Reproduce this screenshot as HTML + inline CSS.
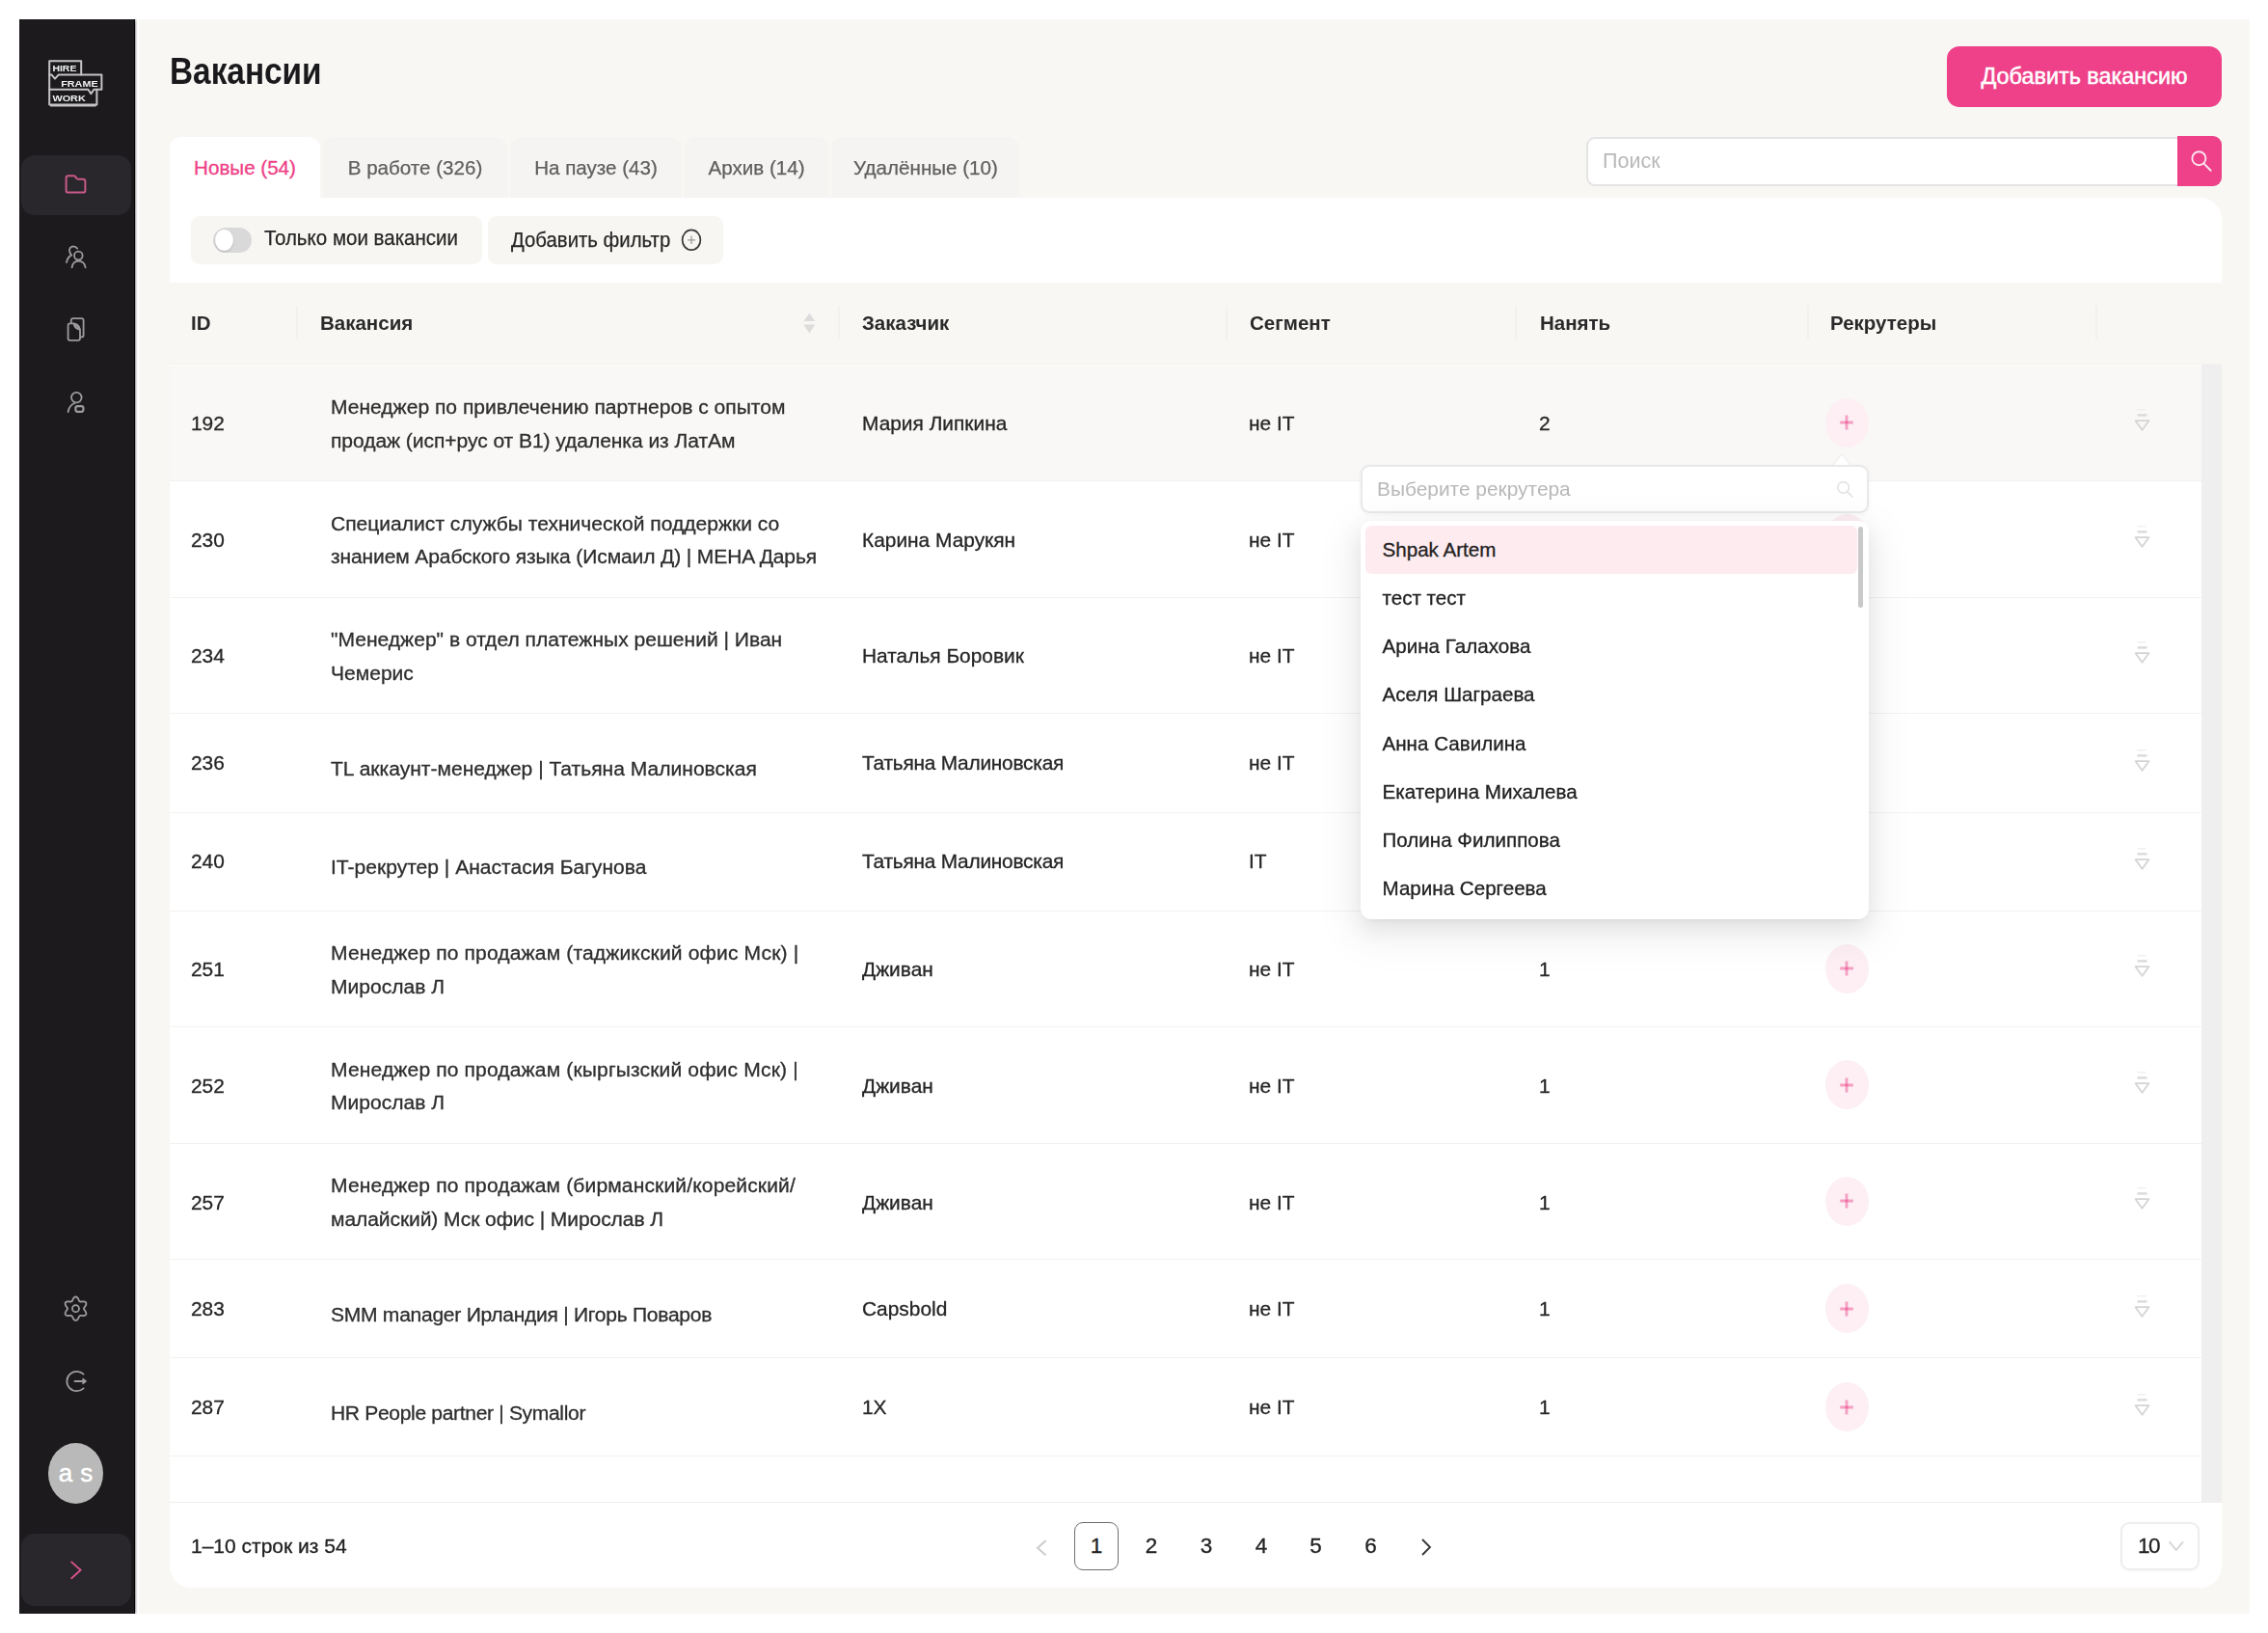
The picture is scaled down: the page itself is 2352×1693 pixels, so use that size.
<!DOCTYPE html>
<html lang="ru">
<head>
<meta charset="utf-8">
<title>Вакансии</title>
<style>
*{box-sizing:border-box;margin:0;padding:0}
html,body{width:2352px;height:1693px;background:#fff;overflow:hidden}
body{font-family:"Liberation Sans",sans-serif;color:#222;position:relative;font-size:21px}
.abs{position:absolute}
.app{position:absolute;left:20px;top:20px;width:2313px;height:1653px;background:#f8f7f4;overflow:hidden}
/* coordinates inside .app are page coords minus 20; we instead use a wrapper shifted -20 */
.pg{filter:blur(.45px);position:absolute;left:-20px;top:-20px;width:2352px;height:1693px}
.side{position:absolute;left:20px;top:20px;width:120.3px;height:1653px;background:#1c1a1d;border-right:1.6px solid #060506;box-shadow:1.5px 0 1.5px rgba(60,60,60,.45), 4.5px 0 0 #fdfdfd}
.nav-act{position:absolute;left:22px;top:161px;width:114px;height:62px;border-radius:14px;background:#29272b}
.nav-col{position:absolute;left:22px;top:1590px;width:114px;height:75px;border-radius:14px;background:#29272b}
.ico{position:absolute;display:block}
.avatar{position:absolute;left:50px;top:1496px;width:57px;height:63px;border-radius:50%;background:#b9b9b9;color:#fff;font-size:26px;text-align:center;line-height:63px;word-spacing:1px;-webkit-text-stroke:.5px #fff}
.title{position:absolute;left:175.5px;top:46px;font-size:38px;font-weight:700;line-height:56px;color:#1a1a1c;white-space:nowrap;transform:scaleX(.878);transform-origin:left center}
.addbtn{position:absolute;left:2019px;top:48px;width:285px;height:63px;border-radius:13px;background:#ee4189;color:#fff;font-size:23.4px;text-align:center;line-height:62px;white-space:nowrap;-webkit-text-stroke:.5px #fff}
.tab{position:absolute;top:142px;height:63px;border-radius:12px 12px 0 0;background:#f5f4f2;color:#5f5f5f;-webkit-text-stroke:.25px #5f5f5f;font-size:20.6px;line-height:64px;text-align:center;white-space:nowrap}
.tab.on{background:#fff;color:#ee3f86;-webkit-text-stroke:.3px #ee3f86}
.search{position:absolute;left:1645px;top:142px;width:659px;height:51px;border-radius:9px;background:#fff;border:2px solid #e5e4e4}
.search .ph{position:absolute;left:15px;top:0;line-height:46px;font-size:21.5px;color:#b8b8b8}
.search .sb{position:absolute;right:-2px;top:-2.7px;width:46px;height:51.2px;background:#ee4189;border-radius:0 9px 9px 0}
.fcard{position:absolute;left:176px;top:205px;width:2128px;height:88px;background:#fff;border-radius:0 22px 0 0}
.chip{position:absolute;top:223.5px;height:50px;border-radius:9px;background:#f7f6f3;font-size:22.2px;line-height:49px;color:#262626;white-space:nowrap;-webkit-text-stroke:.25px #262626}
.chip span{display:inline-block;transform:scaleX(.925);transform-origin:left center}
.toggle{position:absolute;left:221px;top:236px;width:40px;height:26px;border-radius:13px;background:#d9d9d9}
.toggle i{position:absolute;left:2px;top:2px;width:19px;height:22px;border-radius:50%;background:#fff;box-shadow:0 1px 2px rgba(0,0,0,.2)}
.th{position:absolute;top:313px;font-size:20.5px;font-weight:700;line-height:44px;color:#2a2a2a;white-space:nowrap}
.sep{position:absolute;top:317px;width:2px;height:35px;background:#f2f1ef;margin-left:-1px}
.hline{position:absolute;left:176px;width:2128px;height:1.5px;background:#f1f0ed}
.tbody{position:absolute;left:176px;top:378px;width:2107px;height:1179px;background:#fff}
.track{position:absolute;left:2283px;top:378px;width:21px;height:1179px;background:#f0efef}
.row{position:absolute;left:176px;width:2107px;background:#fff;border-bottom:1.5px solid #f3f2f0}
.row.hover{background:#f9f8f6}
.c{position:absolute;top:1.5px;height:100%;display:flex;align-items:center;font-size:20.9px;line-height:34.5px;color:#262626;white-space:nowrap;-webkit-text-stroke:.3px #262626}
.c.sgl{padding-bottom:2px}
.c-id{left:22px}
.c-vac{left:167px;color:#2e2e2e;font-size:21.05px;-webkit-text-stroke:.3px #2e2e2e}
.c-vac.sgl{padding-top:9.5px;padding-bottom:0}
.c-cust{left:718px}
.c-seg{left:1119px}
.c-hire{left:1420px}
.plus{position:absolute;left:1716.5px;top:50%;width:45px;height:51px;margin-top:-25.5px;border-radius:50%;background:#fdeff4;display:flex;align-items:center;justify-content:center}
.pin{position:absolute;left:2035px;top:50%;margin-top:-15px;width:20px;height:26px}
.foot{position:absolute;left:176px;top:1557px;width:2128px;height:89px;background:#fff;border-radius:0 0 22px 22px;border-top:1.5px solid #f0efec}
.ft{position:absolute;font-size:21px;color:#222;line-height:48px;white-space:nowrap;-webkit-text-stroke:.3px #222}
.pgn{position:absolute;top:1578px;width:46px;height:50px;font-size:22.5px;line-height:50px;text-align:center;color:#222;-webkit-text-stroke:.3px #222}
.pgn.on{border:1.6px solid #6e6e6e;border-radius:9px;background:#fff;line-height:47px}
.psize{position:absolute;left:2199px;top:1578px;width:82px;height:50px;border:2px solid #eeeeee;border-radius:9px;background:#fff;box-shadow:0 1px 3px rgba(0,0,0,.03)}
/* dropdown */
.sel{position:absolute;left:1411px;top:482px;width:527px;height:50px;border-radius:9px;background:#fff;border:2px solid #e9e9eb;box-shadow:0 1px 4px rgba(0,0,0,.05)}
.sel .ph{position:absolute;left:15px;top:0;line-height:46px;font-size:20.9px;color:#b8b8b8}
.dd{position:absolute;left:1410.5px;top:540px;width:527.5px;height:413px;border-radius:11px;background:#fff;box-shadow:0 9px 24px rgba(0,0,0,.08),0 4px 9px -6px rgba(0,0,0,.12),0 13px 40px 12px rgba(0,0,0,.05);overflow:hidden}
.dd .it{position:absolute;left:5px;width:510px;height:50px;border-radius:6px;padding-left:18px;font-size:20.6px;line-height:50px;color:#222;white-space:nowrap;-webkit-text-stroke:.3px #222}
.dd .it.on{background:#fdebef}
.dd .thumb{position:absolute;left:516px;top:6px;width:5px;height:84px;border-radius:3px;background:#c9c9c9}

</style>
</head>
<body>
<div class="app"><div class="pg">

<!-- main header -->
<div class="title">Вакансии</div>
<div class="addbtn">Добавить вакансию</div>

<!-- tabs -->
<div class="tab on" style="left:176px;width:156px">Новые (54)</div>
<div class="tab" style="left:335px;width:191px">В работе (326)</div>
<div class="tab" style="left:529px;width:178px">На паузе (43)</div>
<div class="tab" style="left:710px;width:149px">Архив (14)</div>
<div class="tab" style="left:863px;width:194px">Удалённые (10)</div>

<!-- search -->
<div class="search"><span class="ph">Поиск</span><div class="sb">
<svg class="ico" style="left:11.5px;top:12.5px" width="26" height="26" viewBox="0 0 26 26"><circle cx="10.4" cy="10.2" r="7" stroke="#fde3ee" stroke-width="1.9" fill="none"/><path d="M15.6 15.6l7 7.2" stroke="#fde3ee" stroke-width="2" stroke-linecap="round"/></svg>
</div></div>

<!-- filter card -->
<div class="fcard"></div>
<div class="chip" style="left:198px;width:302px;padding-left:76px;line-height:46.4px"><span>Только мои вакансии</span></div>
<div class="toggle"><i></i></div>
<div class="chip" style="left:506px;width:244px;padding-left:23.5px;line-height:49.4px"><span style="transform:scaleX(.917)">Добавить фильтр</span></div>
<svg class="ico" style="left:705px;top:236px" width="24" height="26" viewBox="0 0 24 26"><ellipse cx="12" cy="12.8" rx="9.4" ry="10.4" stroke="#3a3a3a" stroke-width="1.7" fill="none"/><path d="M12 8.6v8.4M8 12.8h8" stroke="#9a9a9a" stroke-width="1.3"/></svg>

<!-- table header -->
<div class="th" style="left:198px">ID</div>
<div class="th" style="left:332px">Вакансия</div>
<div class="th" style="left:894px">Заказчик</div>
<div class="th" style="left:1296px">Сегмент</div>
<div class="th" style="left:1597px">Нанять</div>
<div class="th" style="left:1898px">Рекрутеры</div>
<div class="sep" style="left:308px"></div>
<div class="sep" style="left:870px"></div>
<div class="sep" style="left:1272px"></div>
<div class="sep" style="left:1572px"></div>
<div class="sep" style="left:1875px"></div>
<div class="sep" style="left:2174px"></div>
<svg class="ico" style="left:832px;top:323px" width="14" height="24" viewBox="0 0 14 24"><path d="M7.3 1.7l6 8.3H1.4z" fill="#dcdcdc"/><path d="M7.3 22.4l6-8.8H1.4z" fill="#dcdcdc"/></svg>
<div class="hline" style="top:377px"></div>

<!-- table body -->
<div class="tbody"></div>
<div class="track"></div>
<div class="row hover" style="top:378.6px;height:120.0px">
  <div class="c c-id">192</div>
  <div class="c c-vac"><span>Менеджер по привлечению партнеров с опытом<br><span style="letter-spacing:-0.06px">продаж (исп+рус от B1) удаленка из ЛатАм</span></span></div>
  <div class="c c-cust">Мария Липкина</div>
  <div class="c c-seg">не IT</div>
  <div class="c c-hire">2</div>
  <div class="plus"><svg width="14" height="16" viewBox="0 0 14 16"><path d="M7 .6v14.8M.2 8h13.6" stroke="#f59fc2" stroke-width="2.8" fill="none"/><path d="M5.6 8h2.8" stroke="#ef6aa2" stroke-width="2.8"/></svg></div>
  <div class="pin"><svg width="20" height="26" viewBox="0 0 20 26"><path d="M5.5 1.7h9" stroke="#efefef" stroke-width="1.5" fill="none"/><path d="M5.5 7.4h10" stroke="#dadada" stroke-width="2.4" fill="none"/><path d="M3.6 13.2h13.8l-6.9 9.6z" stroke="#d4d4d4" stroke-width="1.8" fill="none" stroke-linejoin="round"/></svg></div>
</div>
<div class="row" style="top:498.6px;height:121.0px">
  <div class="c c-id">230</div>
  <div class="c c-vac"><span>Специалист службы технической поддержки со<br><span style="letter-spacing:-0.13px">знанием Арабского языка (Исмаил Д) | MEHA Дарья</span></span></div>
  <div class="c c-cust">Карина Марукян</div>
  <div class="c c-seg">не IT</div>
  <div class="c c-hire"></div>
  <div class="plus"><svg width="14" height="16" viewBox="0 0 14 16"><path d="M7 .6v14.8M.2 8h13.6" stroke="#f59fc2" stroke-width="2.8" fill="none"/><path d="M5.6 8h2.8" stroke="#ef6aa2" stroke-width="2.8"/></svg></div>
  <div class="pin"><svg width="20" height="26" viewBox="0 0 20 26"><path d="M5.5 1.7h9" stroke="#efefef" stroke-width="1.5" fill="none"/><path d="M5.5 7.4h10" stroke="#dadada" stroke-width="2.4" fill="none"/><path d="M3.6 13.2h13.8l-6.9 9.6z" stroke="#d4d4d4" stroke-width="1.8" fill="none" stroke-linejoin="round"/></svg></div>
</div>
<div class="row" style="top:619.6px;height:120.0px">
  <div class="c c-id">234</div>
  <div class="c c-vac"><span>"Менеджер" в отдел платежных решений | Иван<br>Чемерис</span></div>
  <div class="c c-cust">Наталья Боровик</div>
  <div class="c c-seg">не IT</div>
  <div class="c c-hire"></div>
  <div class="plus"><svg width="14" height="16" viewBox="0 0 14 16"><path d="M7 .6v14.8M.2 8h13.6" stroke="#f59fc2" stroke-width="2.8" fill="none"/><path d="M5.6 8h2.8" stroke="#ef6aa2" stroke-width="2.8"/></svg></div>
  <div class="pin"><svg width="20" height="26" viewBox="0 0 20 26"><path d="M5.5 1.7h9" stroke="#efefef" stroke-width="1.5" fill="none"/><path d="M5.5 7.4h10" stroke="#dadada" stroke-width="2.4" fill="none"/><path d="M3.6 13.2h13.8l-6.9 9.6z" stroke="#d4d4d4" stroke-width="1.8" fill="none" stroke-linejoin="round"/></svg></div>
</div>
<div class="row" style="top:739.6px;height:103.0px">
  <div class="c c-id sgl">236</div>
  <div class="c c-vac sgl"><span>TL аккаунт-менеджер | Татьяна Малиновская</span></div>
  <div class="c c-cust sgl"><span style="letter-spacing:-0.25px">Татьяна Малиновская</span></div>
  <div class="c c-seg sgl">не IT</div>
  <div class="c c-hire sgl"></div>
  <div class="plus"><svg width="14" height="16" viewBox="0 0 14 16"><path d="M7 .6v14.8M.2 8h13.6" stroke="#f59fc2" stroke-width="2.8" fill="none"/><path d="M5.6 8h2.8" stroke="#ef6aa2" stroke-width="2.8"/></svg></div>
  <div class="pin"><svg width="20" height="26" viewBox="0 0 20 26"><path d="M5.5 1.7h9" stroke="#efefef" stroke-width="1.5" fill="none"/><path d="M5.5 7.4h10" stroke="#dadada" stroke-width="2.4" fill="none"/><path d="M3.6 13.2h13.8l-6.9 9.6z" stroke="#d4d4d4" stroke-width="1.8" fill="none" stroke-linejoin="round"/></svg></div>
</div>
<div class="row" style="top:842.6px;height:102.0px">
  <div class="c c-id sgl">240</div>
  <div class="c c-vac sgl"><span>IT-рекрутер | Анастасия Багунова</span></div>
  <div class="c c-cust sgl"><span style="letter-spacing:-0.25px">Татьяна Малиновская</span></div>
  <div class="c c-seg sgl">IT</div>
  <div class="c c-hire sgl"></div>
  <div class="plus"><svg width="14" height="16" viewBox="0 0 14 16"><path d="M7 .6v14.8M.2 8h13.6" stroke="#f59fc2" stroke-width="2.8" fill="none"/><path d="M5.6 8h2.8" stroke="#ef6aa2" stroke-width="2.8"/></svg></div>
  <div class="pin"><svg width="20" height="26" viewBox="0 0 20 26"><path d="M5.5 1.7h9" stroke="#efefef" stroke-width="1.5" fill="none"/><path d="M5.5 7.4h10" stroke="#dadada" stroke-width="2.4" fill="none"/><path d="M3.6 13.2h13.8l-6.9 9.6z" stroke="#d4d4d4" stroke-width="1.8" fill="none" stroke-linejoin="round"/></svg></div>
</div>
<div class="row" style="top:944.6px;height:120.0px">
  <div class="c c-id">251</div>
  <div class="c c-vac"><span><span style="letter-spacing:0.14px">Менеджер по продажам (таджикский офис Мск) |</span><br>Мирослав Л</span></div>
  <div class="c c-cust">Дживан</div>
  <div class="c c-seg">не IT</div>
  <div class="c c-hire">1</div>
  <div class="plus"><svg width="14" height="16" viewBox="0 0 14 16"><path d="M7 .6v14.8M.2 8h13.6" stroke="#f59fc2" stroke-width="2.8" fill="none"/><path d="M5.6 8h2.8" stroke="#ef6aa2" stroke-width="2.8"/></svg></div>
  <div class="pin"><svg width="20" height="26" viewBox="0 0 20 26"><path d="M5.5 1.7h9" stroke="#efefef" stroke-width="1.5" fill="none"/><path d="M5.5 7.4h10" stroke="#dadada" stroke-width="2.4" fill="none"/><path d="M3.6 13.2h13.8l-6.9 9.6z" stroke="#d4d4d4" stroke-width="1.8" fill="none" stroke-linejoin="round"/></svg></div>
</div>
<div class="row" style="top:1064.6px;height:121.0px">
  <div class="c c-id">252</div>
  <div class="c c-vac"><span><span style="letter-spacing:0.14px">Менеджер по продажам (кыргызский офис Мск) |</span><br>Мирослав Л</span></div>
  <div class="c c-cust">Дживан</div>
  <div class="c c-seg">не IT</div>
  <div class="c c-hire">1</div>
  <div class="plus"><svg width="14" height="16" viewBox="0 0 14 16"><path d="M7 .6v14.8M.2 8h13.6" stroke="#f59fc2" stroke-width="2.8" fill="none"/><path d="M5.6 8h2.8" stroke="#ef6aa2" stroke-width="2.8"/></svg></div>
  <div class="pin"><svg width="20" height="26" viewBox="0 0 20 26"><path d="M5.5 1.7h9" stroke="#efefef" stroke-width="1.5" fill="none"/><path d="M5.5 7.4h10" stroke="#dadada" stroke-width="2.4" fill="none"/><path d="M3.6 13.2h13.8l-6.9 9.6z" stroke="#d4d4d4" stroke-width="1.8" fill="none" stroke-linejoin="round"/></svg></div>
</div>
<div class="row" style="top:1185.6px;height:120.4px">
  <div class="c c-id">257</div>
  <div class="c c-vac"><span><span style="letter-spacing:0.135px">Менеджер по продажам (бирманский/корейский/</span><br><span style="letter-spacing:-0.09px">малайский) Мск офис | Мирослав Л</span></span></div>
  <div class="c c-cust">Дживан</div>
  <div class="c c-seg">не IT</div>
  <div class="c c-hire">1</div>
  <div class="plus"><svg width="14" height="16" viewBox="0 0 14 16"><path d="M7 .6v14.8M.2 8h13.6" stroke="#f59fc2" stroke-width="2.8" fill="none"/><path d="M5.6 8h2.8" stroke="#ef6aa2" stroke-width="2.8"/></svg></div>
  <div class="pin"><svg width="20" height="26" viewBox="0 0 20 26"><path d="M5.5 1.7h9" stroke="#efefef" stroke-width="1.5" fill="none"/><path d="M5.5 7.4h10" stroke="#dadada" stroke-width="2.4" fill="none"/><path d="M3.6 13.2h13.8l-6.9 9.6z" stroke="#d4d4d4" stroke-width="1.8" fill="none" stroke-linejoin="round"/></svg></div>
</div>
<div class="row" style="top:1306.0px;height:102.0px">
  <div class="c c-id sgl">283</div>
  <div class="c c-vac sgl"><span><span style="letter-spacing:-0.27px">SMM manager Ирландия | Игорь Поваров</span></span></div>
  <div class="c c-cust sgl">Capsbold</div>
  <div class="c c-seg sgl">не IT</div>
  <div class="c c-hire sgl">1</div>
  <div class="plus"><svg width="14" height="16" viewBox="0 0 14 16"><path d="M7 .6v14.8M.2 8h13.6" stroke="#f59fc2" stroke-width="2.8" fill="none"/><path d="M5.6 8h2.8" stroke="#ef6aa2" stroke-width="2.8"/></svg></div>
  <div class="pin"><svg width="20" height="26" viewBox="0 0 20 26"><path d="M5.5 1.7h9" stroke="#efefef" stroke-width="1.5" fill="none"/><path d="M5.5 7.4h10" stroke="#dadada" stroke-width="2.4" fill="none"/><path d="M3.6 13.2h13.8l-6.9 9.6z" stroke="#d4d4d4" stroke-width="1.8" fill="none" stroke-linejoin="round"/></svg></div>
</div>
<div class="row" style="top:1408.0px;height:102.2px">
  <div class="c c-id sgl">287</div>
  <div class="c c-vac sgl"><span><span style="letter-spacing:-0.33px">HR People partner | Symallor</span></span></div>
  <div class="c c-cust sgl">1X</div>
  <div class="c c-seg sgl">не IT</div>
  <div class="c c-hire sgl">1</div>
  <div class="plus"><svg width="14" height="16" viewBox="0 0 14 16"><path d="M7 .6v14.8M.2 8h13.6" stroke="#f59fc2" stroke-width="2.8" fill="none"/><path d="M5.6 8h2.8" stroke="#ef6aa2" stroke-width="2.8"/></svg></div>
  <div class="pin"><svg width="20" height="26" viewBox="0 0 20 26"><path d="M5.5 1.7h9" stroke="#efefef" stroke-width="1.5" fill="none"/><path d="M5.5 7.4h10" stroke="#dadada" stroke-width="2.4" fill="none"/><path d="M3.6 13.2h13.8l-6.9 9.6z" stroke="#d4d4d4" stroke-width="1.8" fill="none" stroke-linejoin="round"/></svg></div>
</div>

<!-- footer / pagination -->
<div class="foot"></div>
<div class="ft" style="left:198px;top:1578.5px">1–10 строк из 54</div>
<svg class="ico" style="left:1073px;top:1595px" width="14" height="20" viewBox="0 0 14 20"><path d="M11.5 2.2L3 9.8l8.5 7.6" stroke="#c9c9c9" stroke-width="1.9" fill="none"/></svg>
<div class="pgn on" style="left:1114px">1</div>
<div class="pgn" style="left:1171px">2</div>
<div class="pgn" style="left:1228px">3</div>
<div class="pgn" style="left:1285px">4</div>
<div class="pgn" style="left:1341.5px">5</div>
<div class="pgn" style="left:1398.5px">6</div>
<svg class="ico" style="left:1472px;top:1594px" width="14" height="20" viewBox="0 0 14 20"><path d="M3 2l8 8-8 8" stroke="#333" stroke-width="1.8" fill="none"/></svg>
<div class="psize"><span class="ft" style="left:16px;top:-1px;font-size:22.5px;letter-spacing:-1.6px">10</span>
<svg class="ico" style="left:47px;top:16px" width="18" height="14" viewBox="0 0 18 14"><path d="M1.6 2.4l7.2 8.6 7.2-8.6" stroke="#d2d2d2" stroke-width="1.7" fill="none"/></svg></div>

<!-- recruiter dropdown -->
<svg class="ico" style="left:1898px;top:468px" width="24" height="16" viewBox="0 0 24 16"><path d="M2.5 14.5L12 3l9.5 11.5" fill="#fff" stroke="#f2f1f1" stroke-width="1.4"/></svg>
<div class="sel"><span class="ph">Выберите рекрутера</span>
<svg class="ico" style="left:490px;top:13px" width="20" height="20" viewBox="0 0 20 20"><circle cx="8.6" cy="8.4" r="5.8" stroke="#e2e2e2" stroke-width="1.6" fill="none"/><path d="M12.8 12.8l5 5.2" stroke="#e2e2e2" stroke-width="1.7" stroke-linecap="round"/></svg>
</div>
<div class="dd">
<div class="it on" style="top:5px">Shpak Artem</div>
<div class="it" style="top:55px">тест тест</div>
<div class="it" style="top:105px">Арина Галахова</div>
<div class="it" style="top:155px">Аселя Шаграева</div>
<div class="it" style="top:206px">Анна Савилина</div>
<div class="it" style="top:256px">Екатерина Михалева</div>
<div class="it" style="top:306px">Полина Филиппова</div>
<div class="it" style="top:356px">Марина Сергеева</div>
<div class="thumb"></div>
</div>

<!-- sidebar -->
<div class="side"></div>
<div class="nav-act"></div>
<div class="nav-col"></div>
<div class="avatar">a s</div>
<svg class="ico" style="left:20px;top:20px" width="121" height="1653" viewBox="20 20 121 1653" fill="none" stroke-linecap="round" stroke-linejoin="round">
<!-- logo -->
<g stroke="#c4c4c4" stroke-width="2">
<path d="M51.2 63.2H84.2V77.6H105.4V92.8H100.4V108.6H51.2Z"/>
<path d="M51.2 77.6H53.6L57 81.6L60.6 77.6H84.2" />
<path d="M51.2 92.8H91.4L94.4 97.2L97.4 92.8H100.4" />
<path d="M52 109.3H99.6" stroke-width="2.6" stroke-linecap="butt"/>
</g>
<g fill="#f2f2f2" stroke="none" font-family="Liberation Sans, sans-serif" font-weight="700" font-size="9.6">
<text x="54.4" y="74.4" textLength="25" lengthAdjust="spacingAndGlyphs">HIRE</text>
<text x="63.2" y="89.9" textLength="38.4" lengthAdjust="spacingAndGlyphs">FRAME</text>
<text x="54.4" y="104.9" textLength="34.4" lengthAdjust="spacingAndGlyphs">WORK</text>
</g>
<!-- folder (active) -->
<path d="M68.6 197.4V184.6Q68.6 182.2 71 182.2H76.2Q77.4 182.2 78.2 183.2L79.4 184.8Q80.2 185.8 81.4 185.8H86Q88.4 185.8 88.4 188.2V197.4Q88.4 199.6 86 199.6H71Q68.6 199.6 68.6 197.4Z" stroke="#c9598a" stroke-width="2"/>
<!-- people -->
<g stroke="#9c9c9c" stroke-width="1.8">
<circle cx="81.3" cy="265" r="4.3"/>
<path d="M74.6 277.4Q75.4 270.6 81.4 270.6Q87.6 270.6 88.6 277.4"/>
<path d="M80.2 257.6Q78.6 255.4 76 255.4Q72.2 255.6 72 259.6Q72.2 262.6 74.2 264.4Q70 266.6 69 272.2"/>
</g>
<!-- documents -->
<g stroke="#9c9c9c" stroke-width="1.8">
<path d="M70.6 337.4Q70.6 335.4 72.6 335.4H76.4Q82.8 336.4 83 343.6V350.8Q83 352.8 81 352.8H72.6Q70.6 352.8 70.6 350.8Z"/>
<path d="M76.6 335.6Q77.2 340.8 82.8 341.6Q81.6 336.6 76.6 335.6Z" fill="#8f8f8f"/>
<path d="M73.8 334.6V332.2Q73.8 330.2 75.8 330.2H84.6Q86.6 330.2 86.6 332.2V347.4Q86.6 349.4 84.6 349.4H83.4"/>
</g>
<!-- user with badge -->
<g stroke="#9c9c9c" stroke-width="1.8">
<circle cx="79.3" cy="412.1" r="5.3"/>
<path d="M77.4 418Q71.6 420.4 70.6 427.2"/>
<rect x="78.4" y="421.2" width="8" height="5.6" rx="2" stroke-width="2.2"/>
</g>
<!-- gear -->
<g stroke="#9c9c9c" stroke-width="1.8">
<path d="M87.0 1356.7 L87.2 1355.9 L87.8 1355.1 L88.5 1354.0 L89.2 1352.8 L89.4 1351.6 L89.2 1350.5 L88.4 1349.8 L87.2 1349.4 L85.9 1349.3 L84.6 1349.5 L83.5 1349.5 L82.8 1349.3 L82.2 1348.8 L81.7 1347.8 L81.2 1346.7 L80.5 1345.5 L79.5 1344.7 L78.5 1344.4 L77.5 1344.7 L76.5 1345.5 L75.8 1346.7 L75.3 1347.8 L74.8 1348.8 L74.2 1349.3 L73.5 1349.5 L72.4 1349.5 L71.1 1349.3 L69.8 1349.4 L68.6 1349.8 L67.8 1350.5 L67.6 1351.6 L67.8 1352.8 L68.5 1354.0 L69.2 1355.1 L69.8 1355.9 L70.0 1356.7 L69.8 1357.5 L69.2 1358.3 L68.5 1359.4 L67.8 1360.6 L67.6 1361.8 L67.8 1362.9 L68.6 1363.6 L69.8 1364.0 L71.1 1364.1 L72.4 1363.9 L73.5 1363.9 L74.2 1364.1 L74.8 1364.6 L75.3 1365.6 L75.8 1366.7 L76.5 1367.9 L77.5 1368.7 L78.5 1369.0 L79.5 1368.7 L80.5 1367.9 L81.2 1366.7 L81.7 1365.6 L82.2 1364.6 L82.8 1364.1 L83.5 1363.9 L84.6 1363.9 L85.9 1364.1 L87.2 1364.0 L88.4 1363.6 L89.2 1362.9 L89.4 1361.8 L89.2 1360.6 L88.5 1359.4 L87.8 1358.3 L87.2 1357.5Z"/>
<circle cx="78.5" cy="1356.7" r="3.5"/>
</g>
<!-- logout -->
<g stroke="#9c9c9c" stroke-width="1.8">
<path d="M86.6 1424.6A10.2 10.2 0 1 0 86.6 1439.4"/>
<path d="M77.6 1432H87" stroke-width="2"/>
<path d="M86.2 1429.2L89.6 1432L86.2 1434.8Z" fill="#a3a3a3" stroke-width="1"/>
</g>
<!-- collapse chevron -->
<path d="M74.2 1619.4L83.6 1627.8L74.2 1636.2" stroke="#d6538b" stroke-width="1.9" stroke-linejoin="miter"/>
</svg>

</div></div>
</body>
</html>
